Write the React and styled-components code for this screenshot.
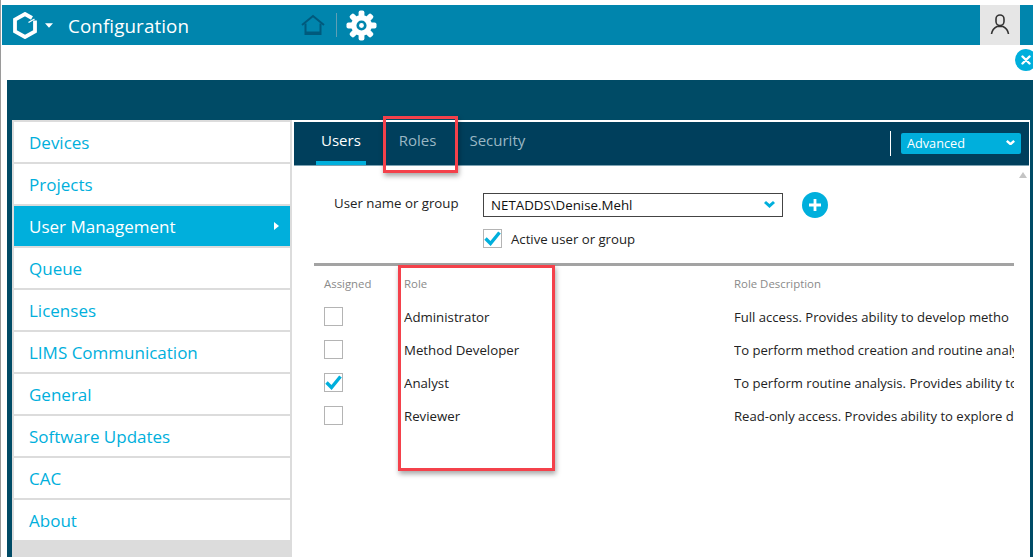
import React from 'react';
import styled, { createGlobalStyle } from 'styled-components';

const GlobalStyle = createGlobalStyle`
  html, body {
    margin: 0;
    padding: 0;
    background: #fff;
    overflow: hidden;
  }
  * {
    box-sizing: border-box;
  }
`;

const Page = styled.div`
  position: relative;
  width: 1033px;
  height: 557px;
  padding-top: 5px;
  display: flex;
  flex-direction: column;
  overflow: hidden;
  font-family: "Open Sans", "Noto Sans", sans-serif;
  border-left: 1px solid #9a9a9a;
  background: #fff;
`;

const Header = styled.header`
  height: 40px;
  margin-left: 1px;
  flex-shrink: 0;
  display: flex;
  align-items: center;
  padding-left: 11px;
  background: #0085ad;
`;

const Title = styled.span`
  margin-left: 15px;
  padding-top: 1px;
  width: 233px;
  color: #fff;
  font-size: 18.8px;
  letter-spacing: 0.1px;
`;

const ToolDivider = styled.span`
  width: 1px;
  height: 24px;
  margin: 0 9px 0 11px;
  background: #5f9fb5;
`;

const UserButton = styled.div`
  width: 40px;
  height: 40px;
  margin-left: auto;
  margin-right: 13px;
  display: flex;
  align-items: center;
  justify-content: center;
  background: #e6e6e6;
`;

const CloseStrip = styled.div`
  height: 35px;
  flex-shrink: 0;
  position: relative;
`;

const CloseButton = styled.div`
  position: absolute;
  right: -4px;
  top: 4px;
  width: 22px;
  height: 22px;
  border-radius: 50%;
  background: #00afdc;
  display: flex;
  align-items: center;
  justify-content: center;
`;

const Shell = styled.div`
  flex: 1;
  margin-left: 6px;
  padding: 40px 3px 0 5px;
  min-height: 0;
  display: flex;
  background: #004b66;
`;

const Nav = styled.nav`
  width: 280px;
  flex-shrink: 0;
  padding: 2px;
  display: flex;
  flex-direction: column;
  gap: 2px;
  background: #dcdcdc;
`;

const NavItem = styled.div`
  height: 40px;
  flex-shrink: 0;
  padding: 0 11px 0 15px;
  display: flex;
  align-items: center;
  justify-content: space-between;
  font-size: 17px;
  color: ${props => (props.$active ? '#fff' : '#00afdc')};
  background: ${props => (props.$active ? '#00afdc' : '#fff')};
`;

const NavArrow = styled.span`
  width: 0;
  height: 0;
  border-left: 5px solid #fff;
  border-top: 4px solid transparent;
  border-bottom: 4px solid transparent;
`;

const Panel = styled.section`
  flex: 1;
  min-width: 0;
  border: solid #fff;
  border-width: 2px 1px 0 2px;
  background: #fff;
  display: flex;
  flex-direction: column;
`;

const TabBar = styled.div`
  height: 44px;
  flex-shrink: 0;
  display: flex;
  align-items: stretch;
  padding-left: 27px;
  background: #003f5c;
  border-bottom: 1px solid #7ea3b3;
`;

const Tab = styled.div`
  position: relative;
  margin-right: ${props => props.$gap}px;
  padding-top: 8px;
  font-size: 15px;
  color: ${props => (props.$active ? '#fff' : '#9ab7c4')};

  &:after {
    content: '';
    display: ${props => (props.$active ? 'block' : 'none')};
    position: absolute;
    left: -5px;
    right: -5px;
    bottom: 0;
    height: 4px;
    background: #00afdc;
  }
`;

const BarRight = styled.div`
  margin-left: auto;
  margin-right: 8px;
  display: flex;
  align-items: center;
`;

const BarDivider = styled.span`
  width: 1px;
  height: 25px;
  margin-right: 10px;
  background: #fff;
`;

const ModeSelect = styled.div`
  width: 120px;
  height: 21px;
  padding: 0 6px 2px;
  display: flex;
  align-items: center;
  justify-content: space-between;
  border-radius: 2px;
  font-size: 12.7px;
  color: #fff;
  background: #00afdc;
`;

const Body = styled.div`
  position: relative;
  flex: 1;
  min-height: 0;
  padding: 27px 0 0 20px;
`;

const ScrollArrow = styled.span`
  position: absolute;
  right: 2px;
  top: 6px;
  width: 0;
  height: 0;
  border-left: 4px solid transparent;
  border-right: 4px solid transparent;
  border-bottom: 6px solid #c4c4c4;
`;

const FormGrid = styled.div`
  display: grid;
  grid-template-columns: 149px 300px auto;
  grid-template-rows: 24px 19px;
  row-gap: 12px;
  margin-left: 20px;
  justify-content: start;
  align-items: center;
`;

const FieldLabel = styled.label`
  font-size: 13.25px;
  color: #222;
  margin-top: -4px;
`;

const UserSelect = styled.div`
  height: 24px;
  padding: 0 7px;
  display: flex;
  align-items: center;
  justify-content: space-between;
  border: 1px solid #444;
  font-size: 13.3px;
  color: #111;
`;

const AddButton = styled.div`
  width: 26px;
  height: 26px;
  margin-left: 19px;
  border-radius: 50%;
  background: #00afdc;
  display: flex;
  align-items: center;
  justify-content: center;
`;

const CheckRow = styled.div`
  grid-column: 2;
  display: flex;
  align-items: center;
  gap: 9px;
  font-size: 13.2px;
  color: #222;
`;

const Box = styled.span`
  width: 19px;
  height: 19px;
  flex-shrink: 0;
  display: flex;
  align-items: center;
  justify-content: center;
  border: 1px solid #b4b4b4;
  background: #fff;
`;

const RoleTable = styled.div`
  width: 700px;
  margin-top: 15px;
  padding: 11px 0 0 10px;
  border-top: 3px solid #a3a3a3;
  overflow: hidden;
  display: grid;
  grid-template-columns: 80px 330px 280px;
  grid-template-rows: 23px repeat(4, 33px);
  align-items: center;
`;

const HeadCell = styled.div`
  align-self: start;
  font-size: 11.4px;
  height: 14px;
  line-height: 14px;
  color: #8a8a8a;
  white-space: nowrap;
`;

const Cell = styled.div`
  font-size: ${props => props.$size}px;
  color: #222;
  white-space: nowrap;
  overflow: hidden;
`;

const Callout = styled.div`
  position: absolute;
  left: ${props => props.$x}px;
  top: ${props => props.$y}px;
  width: ${props => props.$w}px;
  height: ${props => props.$h}px;
  border: 3px solid #f4414b;
  box-shadow: 1px 3px 5px rgba(0, 0, 0, 0.35);
  pointer-events: none;
`;

const Logo = () => (
  <svg width="24" height="27" viewBox="0 0 24 27" fill="none">
    <path d="M19 6 12 2 2 7.700v11.600L12 25l10-5.700V8.500" stroke="#fff" strokeWidth="3.800" />
    <path d="M15.500 10.500 21.500 7" stroke="#fff" strokeWidth="1.400" />
  </svg>
);

const Caret = () => (
  <svg width="8" height="5" viewBox="0 0 9 5" style={{ marginLeft: 8 }}>
    <path d="M0 0h9L4.500 5z" fill="#fff" />
  </svg>
);

const HomeIcon = () => (
  <svg width="24" height="22" viewBox="0 0 24 22" fill="none" stroke="#005a7d" strokeWidth="2">
    <path d="M1 11 12 2l11 9" />
    <path d="M4.500 9.500V20h15V9.500" />
    <path d="M4.500 19h15" strokeWidth="3" />
  </svg>
);

const GearIcon = () => {
  const teeth = [0, 45, 90, 135, 180, 225, 270, 315];
  return (
    <svg width="31" height="31" viewBox="0 0 32 32">
      {teeth.map(angle => (
        <rect key={angle} x="13" y="0.5" width="6" height="9" rx="2" fill="#fff" transform={`rotate(${angle} 16 16)`} />
      ))}
      <circle cx="16" cy="16" r="8" fill="none" stroke="#fff" strokeWidth="5.500" />
      <circle cx="16" cy="16" r="2.500" fill="#fff" />
    </svg>
  );
};

const UserIcon = () => (
  <svg width="20" height="22" viewBox="0 0 20 22" fill="none" stroke="#333" strokeWidth="1.600">
    <path d="M6 7.500V5a4 4 0 0 1 8 0v2.500a4 4 0 0 1-8 0z" />
    <path d="M1.500 20c.5-3.500 2.500-6 5.500-7.500h6c3 1.500 5 4 5.500 7.500" />
  </svg>
);

const CloseIcon = () => (
  <svg width="10" height="10" viewBox="0 0 10 10" stroke="#fff" strokeWidth="2.400" strokeLinecap="round">
    <path d="M1.500 1.500l7 7M8.500 1.500l-7 7" />
  </svg>
);

const PlusIcon = () => (
  <svg width="14" height="14" viewBox="0 0 14 14" stroke="#fff" strokeWidth="2.800">
    <path d="M7 1v12M1 7h12" />
  </svg>
);

const Chevron = ({ color, size = 11 }) => (
  <svg width={size} height={size * 0.64} viewBox="0 0 11 7">
    <path d="M0 2 2 0l3.500 3L9 0l2 2-5.500 5z" fill={color} />
  </svg>
);

const Tick = () => (
  <svg width="17" height="15" viewBox="0 0 17 15" fill="none" stroke="#00afdc" strokeWidth="3.400">
    <path d="M1.500 7.500 6.500 12.500 15.500 1.500" />
  </svg>
);

const navItems = [
  'Devices',
  'Projects',
  'User Management',
  'Queue',
  'Licenses',
  'LIMS Communication',
  'General',
  'Software Updates',
  'CAC',
  'About',
];

// descriptions run under the scroll area in the app, kept as far as they show
const roles = [
  { name: 'Administrator', text: 'Full access. Provides ability to develop metho' },
  { name: 'Method Developer', text: 'To perform method creation and routine analy' },
  { name: 'Analyst', text: 'To perform routine analysis. Provides ability to', checked: true },
  { name: 'Reviewer', text: 'Read-only access. Provides ability to explore d' },
];

const App = () => (
  <Page>
    <GlobalStyle />
    <Header>
      <Logo />
      <Caret />
      <Title>Configuration</Title>
      <HomeIcon />
      <ToolDivider />
      <GearIcon />
      <UserButton>
        <UserIcon />
      </UserButton>
    </Header>
    <CloseStrip>
      <CloseButton>
        <CloseIcon />
      </CloseButton>
    </CloseStrip>
    <Shell>
      <Nav>
        {navItems.map(item => (
          <NavItem key={item} $active={item === 'User Management'}>
            {item}
            {item === 'User Management' && <NavArrow />}
          </NavItem>
        ))}
      </Nav>
      <Panel>
        <TabBar>
          <Tab $active $gap={38}>Users</Tab>
          <Tab $gap={33}>Roles</Tab>
          <Tab $gap={0}>Security</Tab>
          <BarRight>
            <BarDivider />
            <ModeSelect>
              Advanced
              <Chevron color="#fff" size={9} />
            </ModeSelect>
          </BarRight>
        </TabBar>
        <Body>
          <ScrollArrow />
          <FormGrid>
            <FieldLabel>User name or group</FieldLabel>
            <UserSelect>
              NETADDS\Denise.Mehl
              <Chevron color="#00afdc" />
            </UserSelect>
            <AddButton>
              <PlusIcon />
            </AddButton>
            <CheckRow>
              <Box><Tick /></Box>
              Active user or group
            </CheckRow>
          </FormGrid>
          <RoleTable>
            <HeadCell>Assigned</HeadCell>
            <HeadCell>Role</HeadCell>
            <HeadCell>Role Description</HeadCell>
            {roles.map(role => (
              <React.Fragment key={role.name}>
                <Box>{role.checked && <Tick />}</Box>
                <Cell $size={13.25}>{role.name}</Cell>
                <Cell $size={13.1}>{role.text}</Cell>
              </React.Fragment>
            ))}
          </RoleTable>
        </Body>
      </Panel>
    </Shell>
    <Callout $x={382} $y={116} $w={75} $h={57} />
    <Callout $x={397} $y={265} $w={157} $h={206} />
  </Page>
);

export default App;
